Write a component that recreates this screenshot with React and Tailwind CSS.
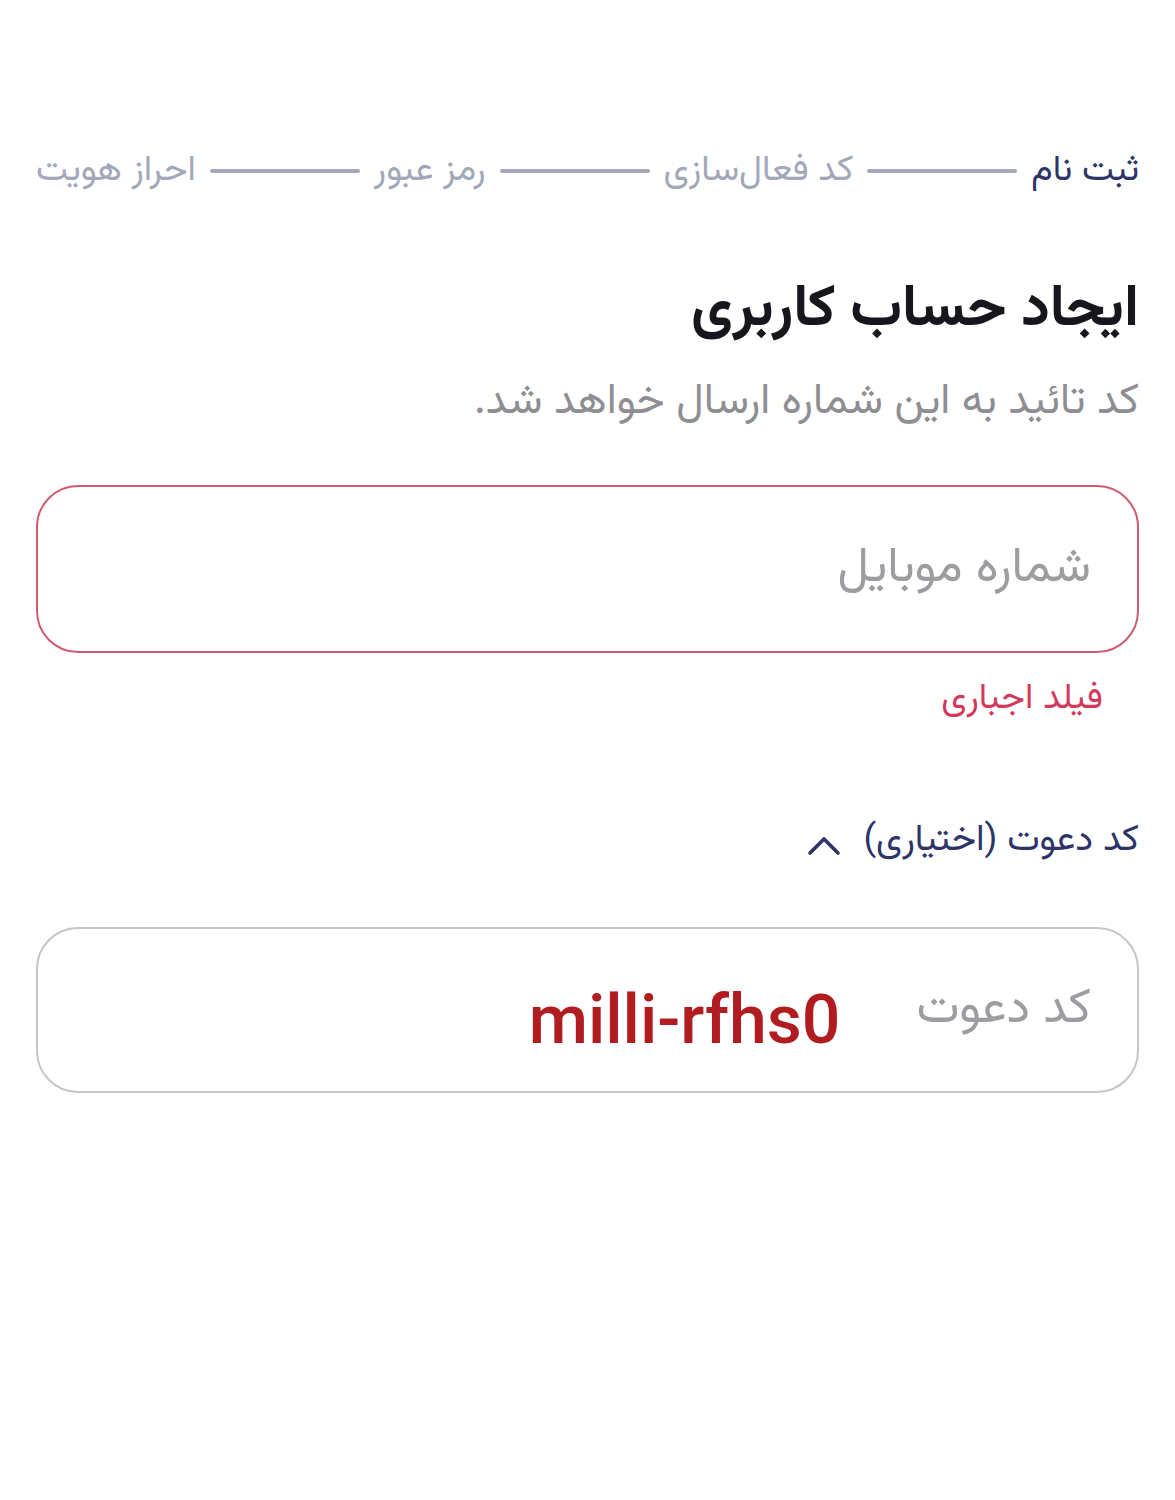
import { Fragment } from "react";

const fa = { fontFamily: '"Vazirmatn", "Noto Sans Arabic", "DejaVu Sans", sans-serif' };

const steps = ["ثبت نام", "کد فعال‌سازی", "رمز عبور", "احراز هویت"];

const App = () => {
  return (
    <div dir="rtl" className="min-h-[1500px] bg-white px-[36px] pt-[147px]" style={fa}>
      {/* Stepper */}
      <div className="flex items-center gap-[14px] text-[36px] leading-[48px]">
        {steps.map((s, i) => (
          <Fragment key={s}>
            <span className={`whitespace-nowrap ${i === 0 ? "text-[#2d3467]" : "text-[#a3a8b8]"}`}>{s}</span>
            {i < steps.length - 1 && <span className="h-[4px] flex-1 rounded-full bg-[#a3a9bb]" />}
          </Fragment>
        ))}
      </div>

      {/* Title */}
      <h1 className="mt-[82px] text-[58px] font-bold leading-[68px] text-[#16161d]">ایجاد حساب کاربری</h1>
      <p className="mt-[30px] text-[43px] leading-[56px] text-[#8e8e93]">کد تائید به این شماره ارسال خواهد شد.</p>

      {/* Mobile input */}
      <div className="mt-[54px] flex h-[168px] items-center rounded-[42px] border-2 border-[#cf5a72] pr-[46px]">
        <span className="text-[49px] leading-[64px] text-[#9c9ca1]">شماره موبایل</span>
      </div>
      <p className="mt-[20px] pr-[36px] text-[36px] leading-[52px] text-[#d23a5d]">فیلد اجباری</p>

      {/* Invite toggle */}
      <button className="mt-[90px] flex items-center gap-[22px] text-[37px] leading-[52px] text-[#2d3467]">
        <span>کد دعوت (اختیاری)</span>
        <svg width="34" height="22" viewBox="0 0 34 22" fill="none" className="mt-[8px]">
          <polyline points="3,19 17,5 31,19" stroke="#2d3467" strokeWidth="3.6" strokeLinecap="round" strokeLinejoin="round" />
        </svg>
      </button>

      {/* Invite input */}
      <div className="mt-[60px] flex h-[166px] items-center gap-[76px] rounded-[42px] border-2 border-[#c6c6c8] pr-[46px]">
        <span className="text-[49px] leading-[64px] text-[#9c9ca1]">کد دعوت</span>
        <span
          dir="ltr"
          className="mt-[20px] text-[68px] font-medium leading-none text-[#b01c1f]"
          style={{ fontFamily: "Roboto, sans-serif" }}
        >
          milli-rfhs0
        </span>
      </div>
    </div>
  );
};

export default App;
